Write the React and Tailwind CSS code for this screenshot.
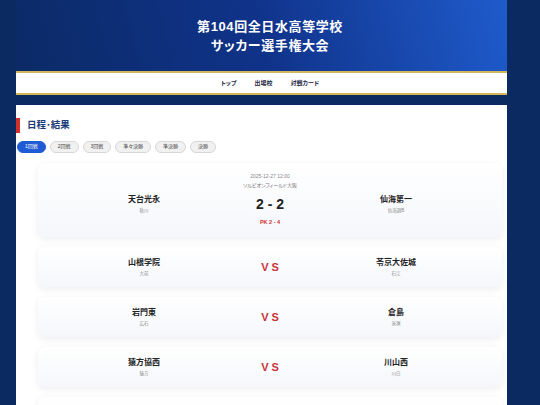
import React from "react";

const tabs = ["1回戦", "2回戦", "3回戦", "準々決勝", "準決勝", "決勝"];

const vsMatches = [
  { home: "山根学院", homePref: "大前", away: "苓京大佐城", awayPref: "石江" },
  { home: "岩門東", homePref: "広石", away: "倉島", awayPref: "米塚" },
  { home: "猿方協西", homePref: "猿方", away: "川山西", awayPref: "川白" },
  { home: "北陵学園", homePref: "北陵", away: "大洋第二", awayPref: "大洋" },
];

function Team({ name, pref }) {
  return (
    <div className="flex-1 flex flex-col items-center">
      <div className="text-[8px] leading-[11px] font-bold text-[#222]">{name}</div>
      <div className="mt-[2px] text-[4.5px] leading-[7px] text-[#8a8a8a]">{pref}</div>
    </div>
  );
}

const cardCls =
  "rounded-[7px] bg-gradient-to-b from-white to-[#f5f7fb] shadow-[0_2px_7px_rgba(20,30,60,0.08)] px-3";

export default function App() {
  return (
    <div
      className="min-h-screen bg-[#0b2a62] pb-6 [font-feature-settings:'palt']"
      style={{ fontFamily: "'Liberation Sans', 'Noto Sans CJK JP', sans-serif" }}
    >
      <div className="ml-4 w-[491px]">
        <header className="h-[71px] pl-[17px] bg-[linear-gradient(75deg,#0b2a66_0%,#10338a_50%,#1f5bcc_100%)] flex flex-col items-center justify-center text-white font-bold text-[13px] leading-[19px] tracking-[0.6px]">
          <div>第104回全日水高等学校</div>
          <div>サッカー選手権大会</div>
        </header>
        <nav className="h-[24px] pl-[17px] bg-white border-y-2 border-[#d3b55a] flex items-center justify-center gap-[18px] text-[6px] font-bold text-[#1f2a44]">
          <span>トップ</span>
          <span>出場校</span>
          <span>対戦カード</span>
        </nav>
        <main className="mt-[10px] bg-white pt-[13px] pb-4">
          <div className="h-[15px] border-l-4 border-[#d0312d] pl-[7px] flex items-center text-[9.5px] font-bold text-[#1b3a78]">
            日程･結果
          </div>
          <div className="mt-2 flex gap-1 pl-[1px]">
            {tabs.map((t, i) => (
              <div
                key={t}
                className={
                  i === 0
                    ? "h-[12px] px-[7px] rounded-full border border-[#1f5bd4] bg-[#1f5bd4] text-white text-[5px] flex items-center"
                    : "h-[12px] px-[7px] rounded-full border border-[#d6d6d6] bg-[#f1f1f1] text-[#444] text-[5px] flex items-center"
                }
              >
                {t}
              </div>
            ))}
          </div>
          <div className="ml-[22px] mr-[5px] mt-[10px] flex flex-col gap-[10px]">
            <div className={cardCls + " pt-[9px] pb-[11px]"}>
              <div className="text-center text-[5px] leading-[8px] text-[#888]">2025-12-27 12:00</div>
              <div className="mt-[1px] text-center text-[5px] leading-[8px] text-[#777]">ソルビオンフィールド大阪</div>
              <div className="mt-[5px] flex items-center">
                <Team name="天台光永" pref="秋川" />
                <div className="w-[64px] text-center text-[14px] leading-[16px] font-bold text-[#222]">2 - 2</div>
                <Team name="仙海第一" pref="仙海調B" />
              </div>
              <div className="mt-[4px] text-center text-[5.5px] leading-[8px] font-bold text-[#d0312d]">PK 2 - 4</div>
            </div>
            {vsMatches.map((m) => (
              <div key={m.home} className={cardCls + " py-[10px] flex items-center"}>
                <Team name={m.home} pref={m.homePref} />
                <div className="w-[64px] text-center text-[11px] leading-[14px] font-bold tracking-[3px] pl-[3px] text-[#c9323a]">VS</div>
                <Team name={m.away} pref={m.awayPref} />
              </div>
            ))}
          </div>
        </main>
      </div>
    </div>
  );
}
